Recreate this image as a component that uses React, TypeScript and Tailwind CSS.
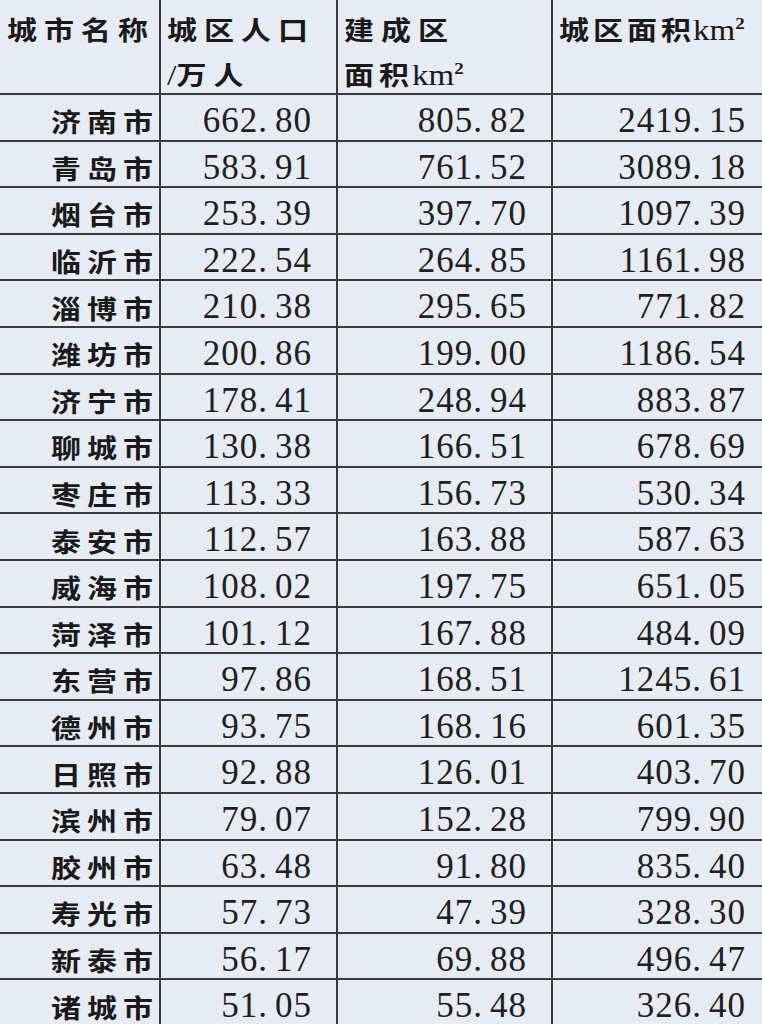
const ROWS: [string, string, string, string][] = [
  ["济南市", "662.80", "805.82", "2419.15"],
  ["青岛市", "583.91", "761.52", "3089.18"],
  ["烟台市", "253.39", "397.70", "1097.39"],
  ["临沂市", "222.54", "264.85", "1161.98"],
  ["淄博市", "210.38", "295.65", "771.82"],
  ["潍坊市", "200.86", "199.00", "1186.54"],
  ["济宁市", "178.41", "248.94", "883.87"],
  ["聊城市", "130.38", "166.51", "678.69"],
  ["枣庄市", "113.33", "156.73", "530.34"],
  ["泰安市", "112.57", "163.88", "587.63"],
  ["威海市", "108.02", "197.75", "651.05"],
  ["菏泽市", "101.12", "167.88", "484.09"],
  ["东营市", "97.86", "168.51", "1245.61"],
  ["德州市", "93.75", "168.16", "601.35"],
  ["日照市", "92.88", "126.01", "403.70"],
  ["滨州市", "79.07", "152.28", "799.90"],
  ["胶州市", "63.48", "91.80", "835.40"],
  ["寿光市", "57.73", "47.39", "328.30"],
  ["新泰市", "56.17", "69.88", "496.47"],
  ["诸城市", "51.05", "55.48", "326.40"],
]

const cjk =
  "inline-block origin-center scale-y-[0.86] font-['Noto_Sans_CJK_SC',sans-serif] font-bold text-[30px] leading-none tracking-[6px] -mr-[6px]"
const num = "font-['Liberation_Serif',serif] text-[35px] tracking-[1px] text-[#202020]"
const cols = "grid grid-cols-[161px_177px_215px_1fr]"
const line = "border-[#3b3b3b]"

function Num({ value }: { value: string }) {
  const [a, b] = value.split(".")
  return (
    <span className={num}>
      {a}.<span className="ml-[7px]">{b}</span>
    </span>
  )
}

function Km() {
  return (
    <span className="ml-[-2px] font-['Liberation_Serif',serif] text-[33px] font-normal tracking-normal">
      km<sup className="-top-[0.7em] text-[19px] font-bold">2</sup>
    </span>
  )
}

export default function App() {
  return (
    <div className="h-[1024px] w-[762px] overflow-hidden bg-[#e7ebf4] text-[#1a1a1a]">
      <div className={`${cols} h-[95px] border-b-2 ${line}`}>
        <div className={`border-r-2 ${line} pl-[7px] pt-[14px]`}>
          <span className={`${cjk} !tracking-[7px]`}>城市名称</span>
        </div>
        <div className={`flex flex-col items-start gap-[15px] border-r-2 ${line} pl-[6px] pt-[14px]`}>
          <span className={`${cjk} !tracking-[7px]`}>城区人口</span>
          <span className={`${cjk} !tracking-[7px]`}>
            <span className="font-['Liberation_Serif',serif] text-[34px] font-normal tracking-normal">/</span>
            万人
          </span>
        </div>
        <div className={`flex flex-col items-start gap-[15px] border-r-2 ${line} pl-[6px] pt-[14px]`}>
          <span className={`${cjk} !tracking-[7px]`}>建成区</span>
          <span className={`${cjk} !tracking-[5px]`}>
            面积<Km />
          </span>
        </div>
        <div className="pl-[6px] pt-[14px]">
          <span className={`${cjk} !tracking-[4px]`}>
            城区面积<Km />
          </span>
        </div>
      </div>
      {ROWS.map(([city, pop, built, area]) => (
        <div key={city} className={`${cols} h-[46.6px] border-b-2 ${line}`}>
          <div className={`flex items-center justify-end border-r-2 ${line} pr-[6px]`}>
            <span className={cjk}>{city}</span>
          </div>
          <div className={`flex items-center justify-end border-r-2 ${line} pr-[24px]`}>
            <Num value={pop} />
          </div>
          <div className={`flex items-center justify-end border-r-2 ${line} pr-[24px]`}>
            <Num value={built} />
          </div>
          <div className="flex items-center justify-end pr-[16px]">
            <Num value={area} />
          </div>
        </div>
      ))}
    </div>
  )
}
